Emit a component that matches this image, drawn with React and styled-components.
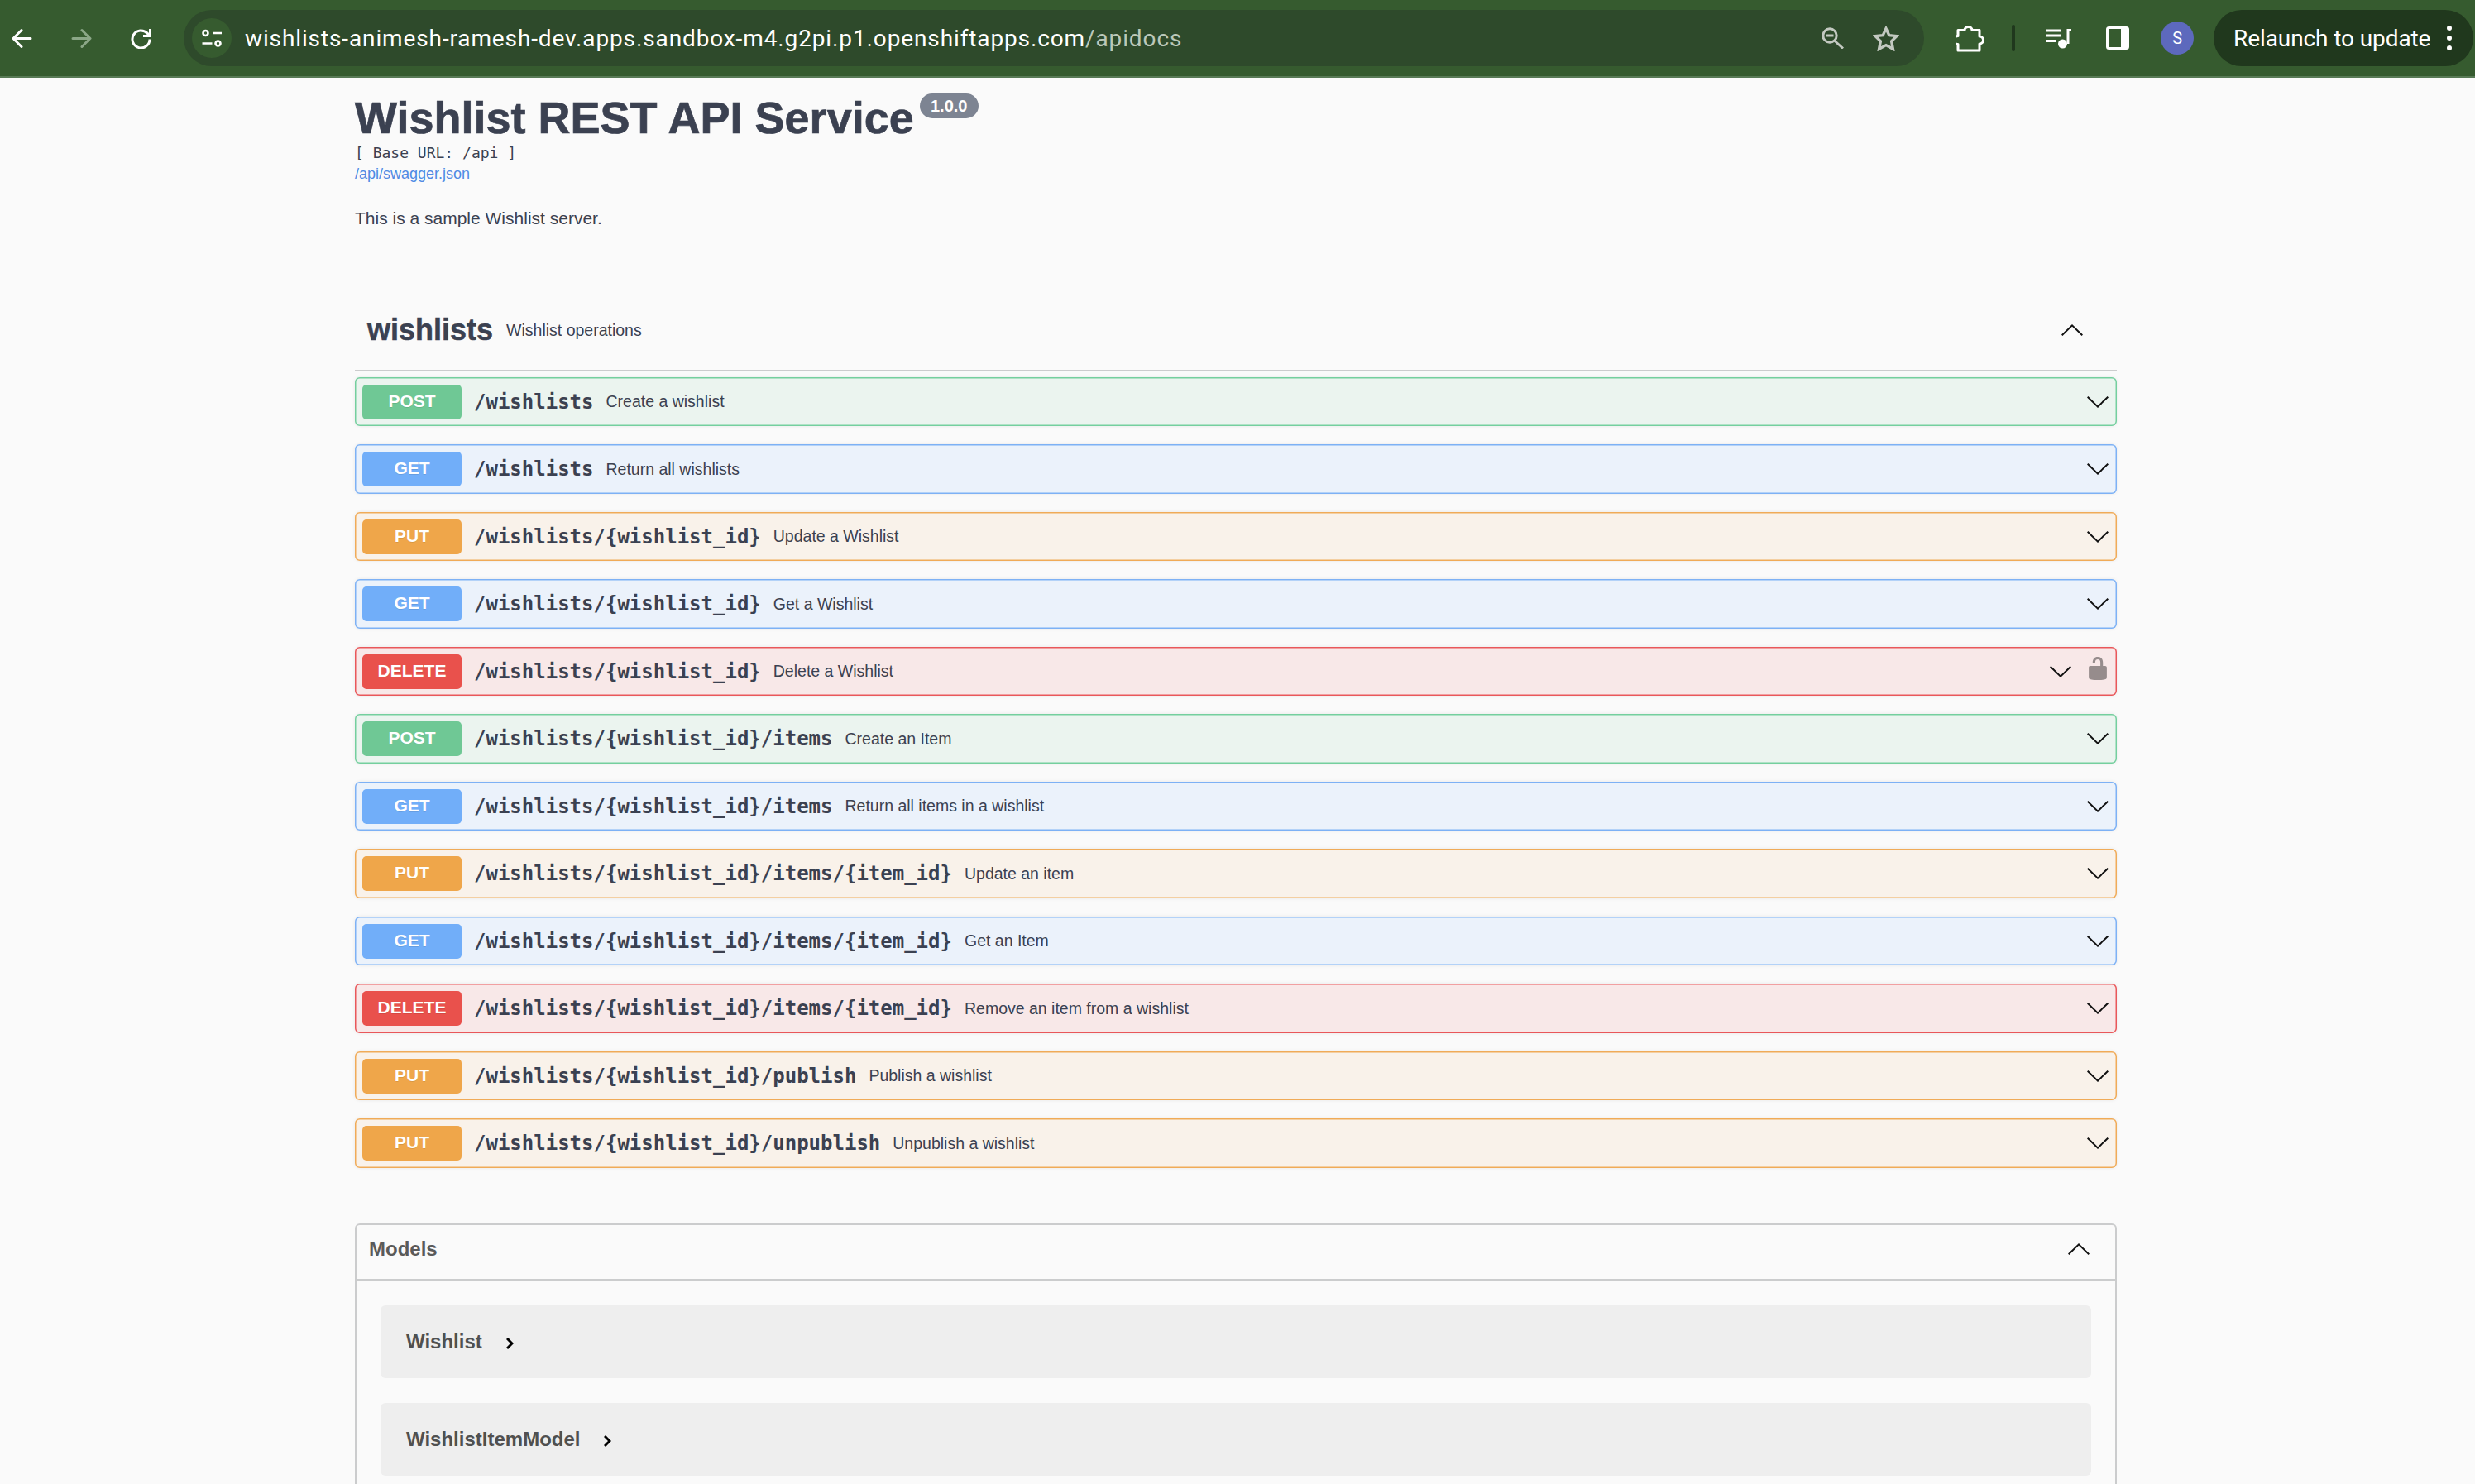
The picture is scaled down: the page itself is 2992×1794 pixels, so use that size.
import React from "react"
import styled, { createGlobalStyle } from "styled-components"

const Global = createGlobalStyle`
  html, body {
    margin: 0;
    height: 100%;
    overflow: hidden;
    background: #fafafa;
  }
  * { box-sizing: border-box; }
`

const Sans = `"Liberation Sans", Arial, sans-serif`
const Mono = `"DejaVu Sans Mono", "Liberation Mono", monospace`

const methods = {
  POST: { main: "#6fc895", line: "#74cf9e", bg: "#ebf4ef" },
  GET: { main: "#71aef9", line: "#7db1f5", bg: "#ebf2fb" },
  PUT: { main: "#efa64a", line: "#f0ab58", bg: "#f9f2ea" },
  DELETE: { main: "#e9514c", line: "#e9575a", bg: "#f8e8e8" },
}

const TopBar = styled.header`
  display: flex;
  align-items: center;
  height: 94px;
  padding: 0 2px 0 14px;
  background: #365b2f;
  border-bottom: 2px solid #587a55;
  font-family: Roboto, sans-serif;
`

const NavIcons = styled.div`
  display: flex;
  align-items: center;
  gap: 47px;
  margin-right: 39px;
`

const AddressPill = styled.div`
  display: flex;
  align-items: center;
  width: 2105px;
  height: 68px;
  padding: 0 30px 0 10px;
  border-radius: 34px;
  background: #2e4a2b;
`

const SiteInfo = styled.div`
  display: flex;
  align-items: center;
  justify-content: center;
  width: 48px;
  height: 48px;
  border-radius: 50%;
  background: #365b2f;
`

const Url = styled.div`
  flex: 1;
  margin-left: 16px;
  font-size: 28px;
  letter-spacing: 0.88px;
  color: #fff;
  white-space: nowrap;
  span { color: #bcc8b9; }
`

const PillIcons = styled.div`
  display: flex;
  align-items: center;
  gap: 35px;
`

const ToolIcon = styled.svg`
  display: block;
  flex: none;
  margin-left: ${(p) => p.$gap || 0}px;
`

const Divider = styled.div`
  width: 4px;
  height: 32px;
  margin-left: 34px;
  border-radius: 2px;
  background: #20381d;
`

const Avatar = styled.div`
  display: flex;
  align-items: center;
  justify-content: center;
  width: 40px;
  height: 40px;
  margin-left: 38px;
  border-radius: 50%;
  background: #5d69bd;
  color: #fff;
  font-size: 20px;
`

const Relaunch = styled.div`
  display: flex;
  align-items: center;
  justify-content: space-between;
  width: 314px;
  height: 68px;
  margin-left: 24px;
  padding: 0 26px 0 24px;
  border-radius: 34px;
  background: #20381d;
  color: #fff;
  font-size: 28px;
  letter-spacing: -0.1px;
  white-space: nowrap;
`

const Kebab = styled.div`
  display: flex;
  flex-direction: column;
  gap: 6px;
  i {
    width: 6px;
    height: 6px;
    border-radius: 50%;
    background: #fff;
  }
`

const Page = styled.main`
  width: 2130px;
  margin-left: 429px;
  padding-top: 17px;
  font-family: ${Sans};
  color: #3b4151;
`

const TitleRow = styled.div`
  display: flex;
  align-items: flex-start;
  height: 63px;
`

const Title = styled.h1`
  margin: 0;
  font-size: 54px;
  line-height: 62px;
  font-weight: 700;
  white-space: nowrap;
  -webkit-text-stroke: 0.7px #3b4151;
`

const Version = styled.span`
  display: flex;
  align-items: center;
  justify-content: center;
  width: 71px;
  height: 30px;
  margin: 2px 0 0 7px;
  border-radius: 15px;
  background: #7d8492;
  color: #fff;
  font-size: 20px;
  font-weight: 700;
`

const BaseUrl = styled.pre`
  margin: 0;
  height: 22px;
  font-family: ${Mono};
  font-size: 18px;
  line-height: 22px;
`

const SpecLink = styled.a`
  display: block;
  margin-top: 2px;
  height: 24px;
  font-size: 18px;
  line-height: 24px;
  color: #4f8ae4;
`

const Description = styled.p`
  margin: 30px 0 0;
  height: 24px;
  font-size: 21px;
  line-height: 24px;
`

const SectionHead = styled.div`
  display: flex;
  align-items: center;
  height: 83px;
  margin-top: 90px;
  padding: 0 41px 15px 15px;
  border-bottom: 2px solid #cbcccd;
`

const SectionName = styled.h3`
  margin: 0;
  font-size: 36px;
  font-weight: 700;
  -webkit-text-stroke: 0.5px #3b4151;
`

const SectionNote = styled.small`
  flex: 1;
  margin-left: 16px;
  font-size: 19.5px;
`

const OpList = styled.div`
  display: flex;
  flex-direction: column;
  gap: 22px;
  margin-top: 6.75px;
`

const OpRow = styled.div`
  display: flex;
  align-items: center;
  height: 59.5px;
  padding: 0 10px 0 9px;
  border-radius: 6px;
  background: ${(p) => methods[p.$method].bg};
  box-shadow: inset 0 0 0 1.5px ${(p) => methods[p.$method].line}, 0 0 4px rgba(0, 0, 0, 0.08);
`

const MethodBadge = styled.span`
  flex: none;
  width: 120px;
  height: 42px;
  border-radius: 5px;
  background: ${(p) => methods[p.$method].main};
  color: #fff;
  font-size: 21px;
  font-weight: 700;
  line-height: 40px;
  text-align: center;
  text-shadow: 0 1px 0 rgba(0, 0, 0, 0.1);
`

const OpPath = styled.span`
  margin-left: 15px;
  font-family: ${Mono};
  font-size: 24px;
  font-weight: 700;
  white-space: nowrap;
`

const OpSummary = styled.span`
  flex: 1;
  margin-left: 15px;
  font-size: 19.5px;
  white-space: nowrap;
`

const Lock = styled.svg`
  flex: none;
  margin: 0 2px 7px 21px;
  fill: #968c8c;
`

const Models = styled.section`
  margin-top: 67px;
  border: 2px solid #cbcccd;
  border-radius: 6px;
`

const ModelsHead = styled.div`
  display: flex;
  align-items: center;
  justify-content: space-between;
  height: 67px;
  padding: 0 31px 6px 15px;
  border-bottom: 2px solid #cbcccd;
  color: #5a5a5a;
  font-size: 24px;
  font-weight: 700;
`

const ModelsBody = styled.div`
  display: flex;
  flex-direction: column;
  gap: 30px;
  padding: 30px 29px;
`

const ModelRow = styled.div`
  display: flex;
  align-items: center;
  gap: 29px;
  height: 88px;
  padding: 0 31px;
  border-radius: 6px;
  background: #eeeeee;
  color: #505050;
  font-size: 24px;
  font-weight: 700;
`

const Chevron = ({ up }) => (
  <svg width="26" height="14" viewBox="0 0 26 14" fill="none" stroke="#111" strokeWidth="2" style={{ flex: "none" }}>
    <polyline points={up ? "0.7,13.3 13,1.4 25.3,13.3" : "0.7,0.7 13,12.6 25.3,0.7"} />
  </svg>
)

const ChevronRight = () => (
  <svg width="9" height="14" viewBox="0 0 9 14" fill="none" stroke="#000" strokeWidth="3" style={{ flex: "none", marginTop: 4 }}>
    <polyline points="1,1 7,7 1,13" />
  </svg>
)

const ops = [
  ["POST", "/wishlists", "Create a wishlist"],
  ["GET", "/wishlists", "Return all wishlists"],
  ["PUT", "/wishlists/{wishlist_id}", "Update a Wishlist"],
  ["GET", "/wishlists/{wishlist_id}", "Get a Wishlist"],
  ["DELETE", "/wishlists/{wishlist_id}", "Delete a Wishlist", true],
  ["POST", "/wishlists/{wishlist_id}/items", "Create an Item"],
  ["GET", "/wishlists/{wishlist_id}/items", "Return all items in a wishlist"],
  ["PUT", "/wishlists/{wishlist_id}/items/{item_id}", "Update an item"],
  ["GET", "/wishlists/{wishlist_id}/items/{item_id}", "Get an Item"],
  ["DELETE", "/wishlists/{wishlist_id}/items/{item_id}", "Remove an item from a wishlist"],
  ["PUT", "/wishlists/{wishlist_id}/publish", "Publish a wishlist"],
  ["PUT", "/wishlists/{wishlist_id}/unpublish", "Unpublish a wishlist"],
]

const App = () => {
  return (
    <>
      <Global />
      <TopBar>
        <NavIcons>
          <svg width="25" height="25" viewBox="0 0 25 25" fill="none" stroke="#fff" strokeWidth="3" strokeLinecap="round" strokeLinejoin="round">
            <path d="M23 12.5H2.5M12 2.5L2 12.5l10 10" />
          </svg>
          <svg width="25" height="25" viewBox="0 0 25 25" fill="none" stroke="#8ba787" strokeWidth="3" strokeLinecap="round" strokeLinejoin="round">
            <path d="M2 12.5h20.5M13 2.5l10 10-10 10" />
          </svg>
          <svg width="25" height="25" viewBox="0 0 25 25" fill="none" stroke="#fff" strokeWidth="3">
            <path d="M23 13.5a10.5 10.5 0 1 1-3-7.4L23.3 9" />
            <path d="M23.5 1v8.5H15" />
          </svg>
        </NavIcons>
        <AddressPill>
          <SiteInfo>
            <svg width="48" height="48" viewBox="0 0 48 48" fill="none" stroke="#fff" strokeWidth="2.6">
              <circle cx="16.5" cy="18" r="3" />
              <path d="M25 18h11M12.5 30.5h12" />
              <circle cx="31.5" cy="30.5" r="3" />
            </svg>
          </SiteInfo>
          <Url>wishlists-animesh-ramesh-dev.apps.sandbox-m4.g2pi.p1.openshiftapps.com<span>/apidocs</span></Url>
          <PillIcons>
            <svg width="27" height="26" viewBox="0 0 27 26" fill="none" stroke="#c3c9c1" strokeWidth="3">
              <circle cx="10" cy="10" r="8.2" />
              <path d="M15.5 16L26 25.5M5.5 10h9" />
            </svg>
            <svg width="32" height="31" viewBox="0 0 32 31" fill="none" stroke="#c3c9c1" strokeWidth="3.4" strokeLinejoin="miter">
              <polygon points="16,3.5 19.8,11.6 29,12.6 22.6,18.8 24.4,28.2 16,23.6 7.6,28.2 9.4,18.8 3,12.6 12.2,11.6" />
            </svg>
          </PillIcons>
        </AddressPill>
        <ToolIcon $gap={39} width="33" height="33" viewBox="0 0 33 33" fill="none" stroke="#fff" strokeWidth="3" strokeLinejoin="round">
          <path d="M2 6.5H10a4.5 4 0 0 1 9 0H28V14a4.5 4.5 0 0 1 0 9V31H2V23.5a5 5 0 0 1 0-10Z" />
        </ToolIcon>
        <Divider />
        <ToolIcon $gap={37} width="31" height="25" viewBox="0 0 31 25" fill="#fff">
          <path d="M0 1.5h18v3H0zM0 7.5h18v3H0zM0 14h12v3H0z" />
          <path d="M25.5 1h5.5v3h-2.5v15h-3z" />
          <circle cx="20.5" cy="19" r="5.5" />
        </ToolIcon>
        <ToolIcon $gap={42} width="28" height="28" viewBox="0 0 28 28" fill="none">
          <rect x="1.5" y="1.5" width="25" height="25" rx="2" stroke="#fff" strokeWidth="3" />
          <rect x="18" y="2" width="9" height="24" fill="#fff" />
        </ToolIcon>
        <Avatar>S</Avatar>
        <Relaunch>
          Relaunch to update
          <Kebab><i /><i /><i /></Kebab>
        </Relaunch>
      </TopBar>

      <Page>
        <TitleRow>
          <Title>Wishlist REST API Service</Title>
          <Version>1.0.0</Version>
        </TitleRow>
        <BaseUrl>[ Base URL: /api ]</BaseUrl>
        <SpecLink>/api/swagger.json</SpecLink>
        <Description>This is a sample Wishlist server.</Description>

        <SectionHead>
          <SectionName>wishlists</SectionName>
          <SectionNote>Wishlist operations</SectionNote>
          <Chevron up />
        </SectionHead>

        <OpList>
          {ops.map(([method, path, summary, locked]) => (
            <OpRow key={method + path} $method={method}>
              <MethodBadge $method={method}>{method}</MethodBadge>
              <OpPath>{path}</OpPath>
              <OpSummary>{summary}</OpSummary>
              <Chevron />
              {locked && (
                <Lock width="22" height="28" viewBox="3 1 14 18">
                  <path d="M15.8 8H14V5.6C14 2.703 12.665 1 10 1 7.334 1 6 2.703 6 5.6V6h2v-.801C8 3.754 8.797 3 10 3c1.203 0 2 .754 2 2.199V8H4c-.553 0-1 .646-1 1.199V17c0 .549.428 1.139.951 1.307l1.197.387C5.672 18.861 6.55 19 7.1 19h5.8c.549 0 1.428-.139 1.951-.307l1.196-.387c.524-.167.953-.757.953-1.306V9.199C17 8.646 16.352 8 15.8 8z" />
                </Lock>
              )}
            </OpRow>
          ))}
        </OpList>

        <Models>
          <ModelsHead>
            Models
            <Chevron up />
          </ModelsHead>
          <ModelsBody>
            <ModelRow>Wishlist <ChevronRight /></ModelRow>
            <ModelRow>WishlistItemModel <ChevronRight /></ModelRow>
          </ModelsBody>
        </Models>
      </Page>
    </>
  )
}

export default App
